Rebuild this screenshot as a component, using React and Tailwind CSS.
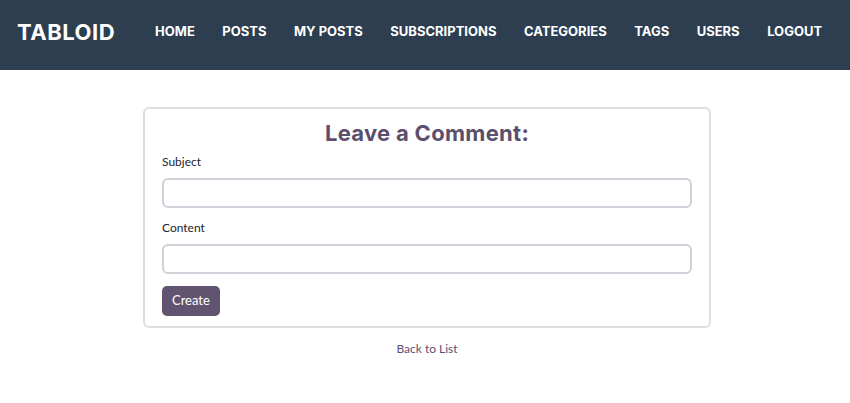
import React from "react";

const navItems = [
  "HOME",
  "POSTS",
  "MY POSTS",
  "SUBSCRIPTIONS",
  "CATEGORIES",
  "TAGS",
  "USERS",
  "LOGOUT",
];

function Header() {
  return (
    <header className="h-[70px] bg-[#2c3e50] flex items-center pl-[17px] pb-[6px] font-['Inter',sans-serif] text-white">
      <div className="text-[22px] font-bold tracking-[0.5px] mr-[40px] whitespace-nowrap">TABLOID</div>
      <nav className="flex items-center gap-[27.5px]">
        {navItems.map((item) => (
          <a key={item} href="#" className="text-[13px] font-bold whitespace-nowrap">
            {item}
          </a>
        ))}
      </nav>
    </header>
  );
}

function CommentForm() {
  return (
    <div className="w-[568px] mx-auto pl-[4px] box-content">
      <div className="border-2 border-[#dedede] rounded-[6px] px-[17px] pt-[10px] pb-[10px]">
        <h2 className="text-center text-[22px] leading-[28px] font-bold tracking-[0.3px] text-[#5b4f6e] font-['Inter',sans-serif] mb-[7px]">
          Leave a Comment:
        </h2>
        <label className="block text-[12px] leading-[16px] text-[#212529] mb-[8px]">Subject</label>
        <input className="block w-full h-[30px] border-2 border-[#cfd2d8] rounded-[6px] outline-none mb-[12px]" />
        <label className="block text-[12px] leading-[16px] text-[#212529] mb-[8px]">Content</label>
        <input className="block w-full h-[30px] border-2 border-[#cfd2d8] rounded-[6px] outline-none mb-[12px]" />
        <button className="block h-[30px] px-[10px] bg-[#615471] text-white text-[13px] rounded-[5px]">
          Create
        </button>
      </div>
      <div className="text-center mt-[11px] leading-[16px]">
        <a href="#" className="text-[12px] text-[#5b4f6e]">Back to List</a>
      </div>
    </div>
  );
}

export default function App() {
  return (
    <div className="min-h-[403px] bg-white font-['Lato',sans-serif]">
      <Header />
      <main className="pt-[37px]">
        <CommentForm />
      </main>
    </div>
  );
}
